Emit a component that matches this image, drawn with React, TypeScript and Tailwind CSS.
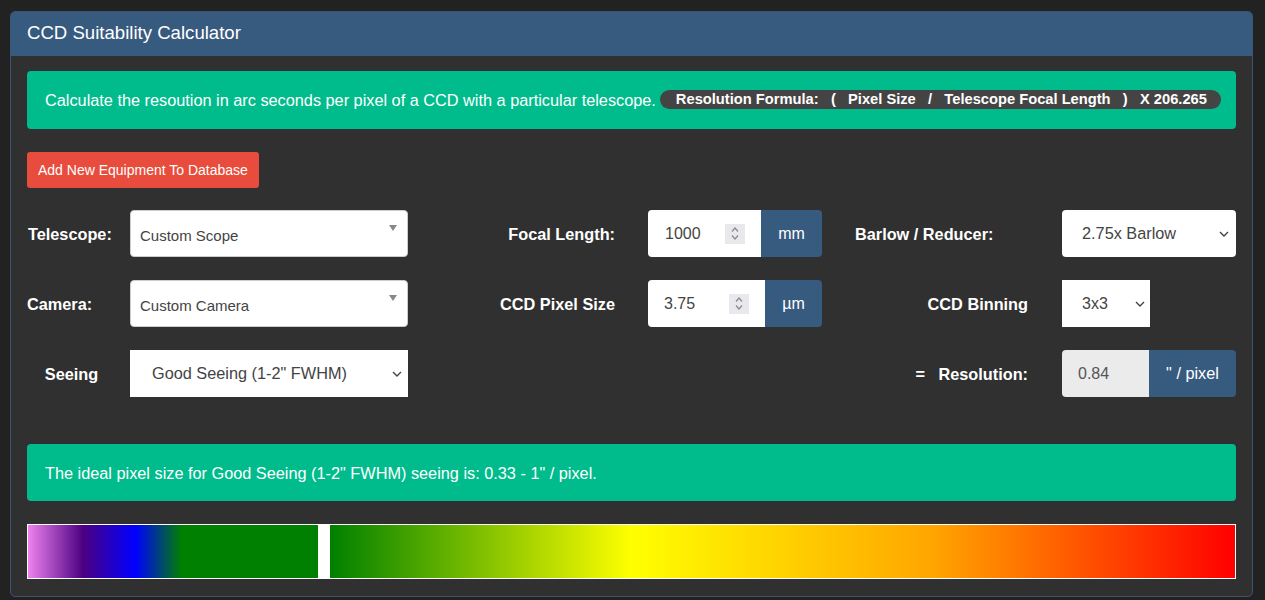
import React from "react";

const font = { fontFamily: '"Liberation Sans", Arial, sans-serif' };

function Chevron() {
  return (
    <svg width="10" height="6" viewBox="0 0 10 6" className="shrink-0">
      <polyline points="1,1 5,5 9,1" fill="none" stroke="#444" strokeWidth="1.4" />
    </svg>
  );
}

function Spinner() {
  return (
    <div className="w-[20px] h-[20px] bg-[#e9e9ed] flex flex-col items-center justify-center gap-[3px] shrink-0">
      <svg width="8" height="5" viewBox="0 0 8 5">
        <polyline points="1,4.5 4,1 7,4.5" fill="none" stroke="#8a8a8a" strokeWidth="1.2" />
      </svg>
      <svg width="8" height="5" viewBox="0 0 8 5">
        <polyline points="1,0.5 4,4 7,0.5" fill="none" stroke="#8a8a8a" strokeWidth="1.2" />
      </svg>
    </div>
  );
}

function ChosenSelect({ value }: { value: string }) {
  return (
    <div className="relative w-[278px] h-[47px] bg-white rounded-[4px] border border-[#ccc] flex items-center pl-[9px] pt-[5px] text-[15px] text-[#444]">
      {value}
      <span className="absolute right-[10px] top-[14px] w-0 h-0 border-l-[4px] border-r-[4px] border-t-[6px] border-l-transparent border-r-transparent border-t-[#888]" />
    </div>
  );
}

function Label({ children, className = "" }: { children: React.ReactNode; className?: string }) {
  return <div className={"font-bold text-[16.3px] text-white pt-[2px] " + className}>{children}</div>;
}

export default function App() {
  return (
    <div className="min-h-[600px] bg-[#222] pt-[11px] pl-[10px]" style={font}>
      <div className="w-[1243px] rounded-[5px] border border-[#3b5470] bg-[#303030] overflow-hidden">
        {/* title bar */}
        <div className="h-[44px] bg-[#375a7f] flex items-center px-[16px] pb-[3px] text-[18.6px] text-white">
          CCD Suitability Calculator
        </div>

        <div className="px-[16px] pt-[15px] pb-[17px]">
          {/* intro */}
          <div className="h-[58px] rounded-[4px] bg-[#00bc8c] flex items-center pl-[18px] text-[16.3px] text-white">
            <span className="pt-[1px]">Calculate the resoution in arc seconds per pixel of a CCD with a particular telescope.</span>
            <span className="ml-[4px] -mt-[2px] h-[19px] rounded-full bg-[#444] flex items-center pl-[16px] pr-[14px] text-[14.7px] font-bold text-white whitespace-pre">
              {"Resolution Formula:   (   Pixel Size   /   Telescope Focal Length   )   X 206.265"}
            </span>
          </div>

          {/* action */}
          <button className="mt-[23px] h-[36px] px-[11px] rounded-[3px] bg-[#e74c3c] text-[14px] text-white">
            Add New Equipment To Database
          </button>

          {/* row 1 */}
          <div className="mt-[22px] flex items-center h-[47px]">
            <Label className="w-[103px] pl-[1px]">Telescope:</Label>
            <ChosenSelect value="Custom Scope" />
            <Label className="w-[207px] text-right">Focal Length:</Label>
            <div className="ml-[33px] w-[174px] h-[47px] flex rounded-[4px] overflow-hidden">
              <div className="flex-1 bg-white flex items-center pl-[17px] pr-[16px] text-[16px] text-[#444]">
                <span className="flex-1">1000</span>
                <Spinner />
              </div>
              <div className="w-[61px] bg-[#375a7f] flex items-center justify-center text-[16px] text-white">mm</div>
            </div>
            <Label className="ml-[33px] w-[173px]">Barlow / Reducer:</Label>
            <div className="ml-[34px] w-[174px] h-[47px] rounded-[4px] bg-white flex items-center pl-[20px] pr-[7px] text-[16.3px] text-[#444]">
              <span className="flex-1">2.75x Barlow</span>
              <Chevron />
            </div>
          </div>

          {/* row 2 */}
          <div className="mt-[23px] flex items-center h-[47px]">
            <Label className="w-[103px]">Camera:</Label>
            <ChosenSelect value="Custom Camera" />
            <Label className="w-[207px] text-right">CCD Pixel Size</Label>
            <div className="ml-[33px] w-[174px] h-[47px] flex rounded-[4px] overflow-hidden">
              <div className="flex-1 bg-white flex items-center pl-[16px] pr-[16px] text-[16px] text-[#444]">
                <span className="flex-1">3.75</span>
                <Spinner />
              </div>
              <div className="w-[57px] bg-[#375a7f] flex items-center justify-center text-[16px] text-white">µm</div>
            </div>
            <Label className="ml-[33px] w-[173px] text-right">CCD Binning</Label>
            <div className="ml-[34px] w-[88px] h-[47px] bg-white flex items-center pl-[20px] pr-[5px] text-[16px] text-[#444]">
              <span className="flex-1">3x3</span>
              <Chevron />
            </div>
          </div>

          {/* row 3 */}
          <div className="mt-[23px] flex items-center h-[47px]">
            <Label className="w-[89px] mr-[14px] text-center">Seeing</Label>
            <div className="w-[278px] h-[47px] bg-white flex items-center pl-[22px] pr-[6px] text-[16.3px] text-[#444]">
              <span className="flex-1">Good Seeing (1-2" FWHM)</span>
              <Chevron />
            </div>
            <div className="w-[447px]" />
            <Label className="w-[173px] text-right whitespace-pre">{"=   Resolution:"}</Label>
            <div className="ml-[34px] w-[174px] h-[47px] flex rounded-[4px] overflow-hidden">
              <div className="w-[87px] bg-[#ebebeb] flex items-center pl-[16px] text-[16px] text-[#555]">0.84</div>
              <div className="flex-1 bg-[#375a7f] flex items-center justify-center text-[16.3px] text-white">" / pixel</div>
            </div>
          </div>

          {/* seeing advice */}
          <div className="mt-[47px] h-[57px] rounded-[4px] bg-[#00bc8c] flex items-center pl-[18px] pt-[1px] text-[16.3px] text-white">
            The ideal pixel size for Good Seeing (1-2" FWHM) seeing is: 0.33 - 1" / pixel.
          </div>

          {/* resolution scale */}
          <div className="mt-[23px] h-[55px] border border-white bg-white flex">
            <div className="w-[290px] bg-[linear-gradient(to_right,#ee82ee_0%,#4b0082_19%,#0000ff_37%,#008000_53%,#008000_100%)]" />
            <div className="w-[12px] bg-white" />
            <div className="flex-1 bg-[linear-gradient(to_right,#008000,#ffff00,#ffa500,#ff0000)]" />
          </div>
        </div>
      </div>
    </div>
  );
}
